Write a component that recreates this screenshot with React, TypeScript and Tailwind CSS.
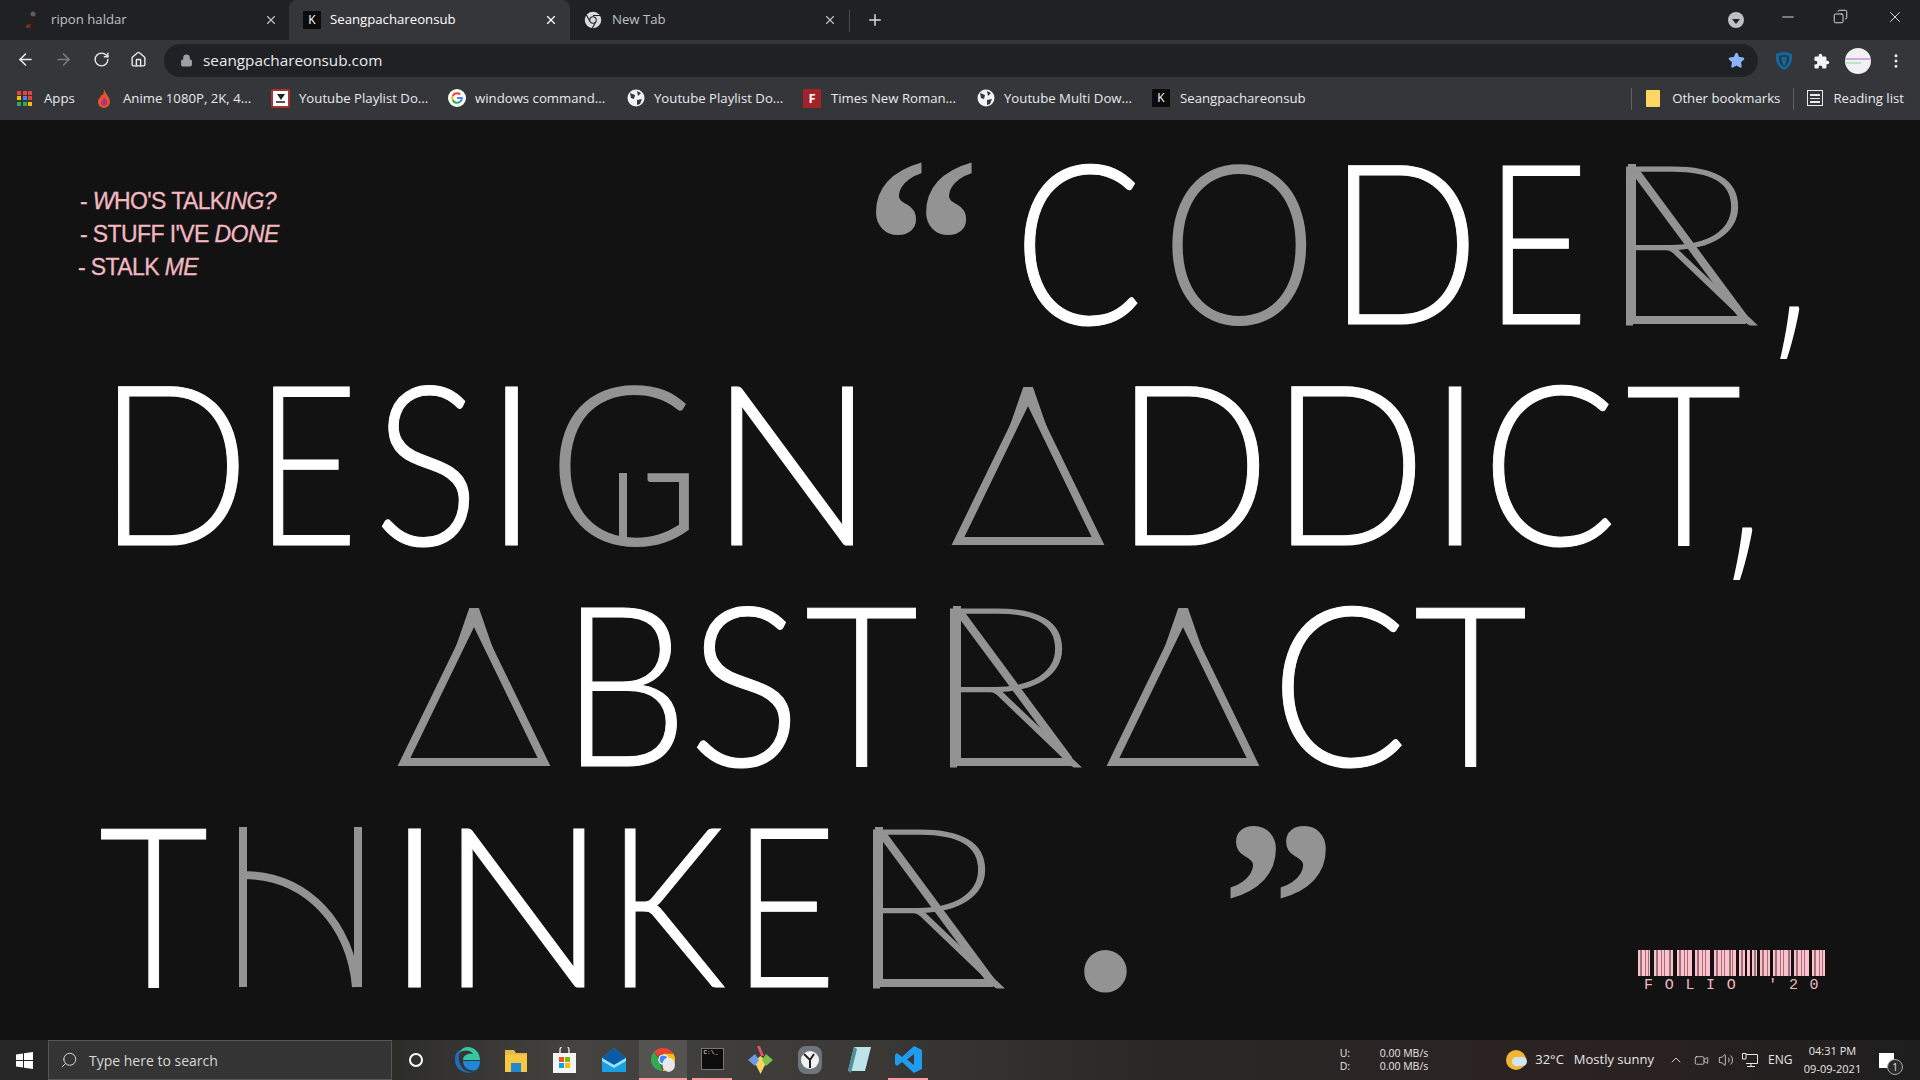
import type { JSX, ReactNode } from "react";
import {
  ArrowLeft,
  ArrowRight,
  ChevronUp,
  Copy,
  Ellipsis,
  Home,
  Lock,
  Minus,
  Plus,
  RotateCw,
  Search,
  Star,
  Video,
  Volume2,
  X,
} from "lucide-react";

const BG = "#121212";
const GREY = "#939393";

const Glyph = ({
  c,
  box,
  inner,
  children,
}: {
  c: string;
  box: string;
  inner: string;
  children?: ReactNode;
}): JSX.Element => (
  <div className={`relative flex shrink-0 justify-center ${box}`}>
    <span className={`block shrink-0 ${inner}`}>{c}</span>
    {children}
  </div>
);

// ornaments that sit over the real letters
const Overlay = ({ w, children }: { w: number; children: ReactNode }): JSX.Element => (
  <svg
    className="absolute left-0 top-[37px] overflow-visible"
    width={w}
    height={160}
    viewBox={`0 0 ${w} 160`}
  >
    {children}
  </svg>
);

const RMark = (): JSX.Element => (
  <Overlay w={123}>
    <path d="M4 0 V160 M0 156 H118 M8 8 L116 154" fill="none" stroke={GREY} strokeWidth={8} />
  </Overlay>
);

const TriangleMark = (): JSX.Element => (
  <Overlay w={150}>
    <polygon points="75,12 5,156 145,156" fill={BG} stroke={GREY} strokeWidth={8} />
  </Overlay>
);

const Big = "font-light text-[223px] leading-[221px] text-white [-webkit-text-stroke:1px_#fff]";
const Dim = "font-light text-[223px] leading-[221px] text-[#939393]";
const DimR = "font-thin text-[223px] leading-[221px] text-[#939393] [-webkit-text-stroke:3px_#939393] scale-x-[1.25] -translate-x-[12px]";
const Comma = "font-['Open_Sans',sans-serif] font-light text-[215px] leading-[221px] text-white translate-y-[10px] scale-x-[0.8]";
const Quote = "font-['Liberation_Serif',serif] font-bold text-[240px] leading-[221px] text-[#939393] translate-y-[4px] scale-x-[0.95]";

const Headline = (): JSX.Element => (
  <div className="flex flex-col font-['Lato',sans-serif]">
    <div className="flex h-[221px]">
      <nav className="ml-[78px] mt-[61px] flex w-[220px] shrink-0 flex-col gap-[7px] whitespace-nowrap font-['Liberation_Sans',sans-serif] text-[23px] leading-[26px] tracking-[-0.6px] text-[#f2b8c1] [-webkit-text-stroke:0.3px_#f2b8c1]">
        <span className="pl-[2px]">- <i>W</i>HO'S TALK<i>ING?</i></span>
        <span className="pl-[2px]">- STUFF I'VE <i>DONE</i></span>
        <span>- STALK <i>ME</i></span>
      </nav>
      <Glyph c="“" box="ml-[575px] w-[97px]" inner={Quote} />
      <Glyph c="C" box="ml-[52px] w-[115px]" inner={`${Big} scale-x-[0.86] -translate-x-[1px]`} />
      <Glyph c="O" box="ml-[36px] w-[132px]" inner={`${Dim} scale-x-[0.89]`} />
      <Glyph c="D" box="ml-[42px] w-[121px]" inner={`${Big} scale-x-[0.9] -translate-x-[4px]`} />
      <Glyph c="E" box="ml-[36px] w-[79px]" inner={`${Big} scale-x-[0.81] -translate-x-[7px]`} />
      <Glyph c="R" box="ml-[45px] w-[123px]" inner={DimR}><RMark /></Glyph>
      <Glyph c="," box="ml-[27px] w-[28px]" inner={Comma} />
    </div>
    <div className="flex h-[221px] pl-[117px]">
      <Glyph c="D" box="w-[121px]" inner={`${Big} scale-x-[0.9] -translate-x-[4px]`} />
      <Glyph c="E" box="ml-[35px] w-[78px]" inner={`${Big} scale-x-[0.8] -translate-x-[5px]`} />
      <Glyph c="S" box="ml-[34px] w-[84px]" inner={`${Big} scale-x-[0.89]`} />
      <Glyph c="I" box="ml-[37px] w-[11px]" inner={Big} />
      <Glyph c="G" box="ml-[42px] w-[132px]" inner={`${Dim} scale-x-[0.95]`}>
        <Overlay w={132}>
          <path d="M64 160 L64 88" fill="none" stroke={GREY} strokeWidth={8} />
        </Overlay>
      </Glyph>
      <Glyph c="N" box="ml-[42px] w-[121px]" inner={`${Big} scale-x-[0.99] -translate-x-[1px]`} />
      <Glyph c="A" box="ml-[99px] w-[150px]" inner={`${Dim} scale-x-[0.85]`}><TriangleMark /></Glyph>
      <Glyph c="D" box="ml-[33px] w-[123px]" inner={`${Big} scale-x-[0.925] -translate-x-[5px]`} />
      <Glyph c="D" box="ml-[35px] w-[120px]" inner={`${Big} scale-x-[0.925] -translate-x-[5px]`} />
      <Glyph c="I" box="ml-[35px] w-[12px]" inner={Big} />
      <Glyph c="C" box="ml-[33px] w-[120px]" inner={`${Big} scale-x-[0.9] -translate-x-[5px]`} />
      <Glyph c="T" box="ml-[15px] w-[110px]" inner={`${Big} scale-x-[0.9]`} />
      <Glyph c="," box="-ml-[9px] w-[30px]" inner={Comma} />
    </div>
    <div className="flex h-[221px] pl-[399px]">
      <Glyph c="A" box="w-[150px]" inner={`${Dim} scale-x-[0.85]`}><TriangleMark /></Glyph>
      <Glyph c="B" box="ml-[30px] w-[97px]" inner={`${Big} scale-x-[0.91] -translate-x-[3px]`} />
      <Glyph c="S" box="ml-[24px] w-[90px]" inner={`${Big} scale-x-[0.95]`} />
      <Glyph c="T" box="ml-[18px] w-[108px]" inner={`${Big} scale-x-[0.88]`} />
      <Glyph c="R" box="ml-[37px] w-[122px]" inner={DimR}><RMark /></Glyph>
      <Glyph c="A" box="ml-[33px] w-[150px]" inner={`${Dim} scale-x-[0.85]`}><TriangleMark /></Glyph>
      <Glyph c="C" box="ml-[24px] w-[120px]" inner={`${Big} scale-x-[0.91] -translate-x-[3px]`} />
      <Glyph c="T" box="ml-[15px] w-[107px]" inner={`${Big} scale-x-[0.88]`} />
    </div>
    <div className="flex h-[221px] pl-[102px]">
      <Glyph c="T" box="w-[104px]" inner={`${Big} scale-x-[0.85]`} />
      <Glyph c="H" box="ml-[33px] w-[123px]" inner={`${Dim} scale-x-[0.85]`}>
        <Overlay w={123}>
          <rect x={9} y={0} width={104} height={160} fill={BG} />
          <path d="M4 0 L4 160 M119 0 L119 160 M4 48 C 70 48 112 100 117 160" fill="none" stroke={GREY} strokeWidth={8} />
        </Overlay>
      </Glyph>
      <Glyph c="I" box="ml-[46px] w-[13px]" inner={Big} />
      <Glyph c="N" box="ml-[43px] w-[120px]" inner={`${Big} scale-x-[1] -translate-x-[1px]`} />
      <Glyph c="K" box="ml-[43px] w-[98px]" inner={`${Big} scale-x-[0.85] -translate-x-[10px]`} />
      <Glyph c="E" box="ml-[25px] w-[79px]" inner={`${Big} scale-x-[0.81] -translate-x-[5px]`} />
      <Glyph c="R" box="ml-[46px] w-[123px]" inner={DimR}><RMark /></Glyph>
      <Glyph c="." box="ml-[86px] w-[43px]" inner="font-normal text-[340px] leading-[221px] text-[#939393] -translate-y-[42px]" />
      <Glyph c="”" box="ml-[103px] w-[97px]" inner={Quote} />
    </div>
  </div>
);

const BARCODE_GROUPS: [number, number][] = [
  [0, 12], [16, 19], [39, 15], [57, 15], [76, 22], [101, 6],
  [109, 3], [114, 5], [122, 10], [135, 18], [156, 15], [174, 13],
];

const Barcode = (): JSX.Element => (
  <svg width={187} height={26} viewBox="0 0 187 26" className="block">
    {BARCODE_GROUPS.map(([x, w]) => (
      <g key={x}>
        <rect x={x} y={0} width={w} height={26} fill="#ffc0cb" />
        {Array.from({ length: Math.floor(w / 4) }, (_, i) => (
          <rect key={i} x={x + 2 + i * 4 + (i % 2)} y={0} width={i % 3 === 0 ? 2 : 1} height={26} fill="#98747b" />
        ))}
      </g>
    ))}
  </svg>
);

const Tab = ({
  icon,
  label,
  active,
  close,
  className,
}: {
  icon: ReactNode;
  label: string;
  active?: boolean;
  close: string;
  className: string;
}): JSX.Element => (
  <div className={`flex h-full shrink-0 items-center ${className} ${active ? "rounded-t-[8px] bg-[#35363a] text-white" : "text-[#bdc1c6]"}`}>
    {icon}
    <span className="grow text-[13.2px]">{label}</span>
    <X className={close} size={14} />
  </div>
);

const KIcon = (): JSX.Element => (
  <span className="flex size-[18px] shrink-0 items-center justify-center bg-[#0b0b0b] text-[12px] text-white">K</span>
);

const Globe = (): JSX.Element => (
  <svg width={18} height={18} viewBox="0 0 18 18" className="shrink-0">
    <circle cx={9} cy={9} r={8.5} fill="#f1f3f4" />
    <path d="M3 4 L8 6 L7 10 L4 9 Z M10 2 L14 4 L11 7 Z M10 11 L15 10 L13 15 L10 16 Z" fill="#35363a" />
  </svg>
);

const GoogleG = (): JSX.Element => (
  <svg width={18} height={18} viewBox="0 0 18 18" className="shrink-0">
    <circle cx={9} cy={9} r={9} fill="#fff" />
    <path d="M9 4.2 A4.8 4.8 0 0 1 12.2 5.4" stroke="#ea4335" strokeWidth={2} fill="none" />
    <path d="M9 4.2 A4.8 4.8 0 0 0 4.7 7" stroke="#ea4335" strokeWidth={2} fill="none" />
    <path d="M4.7 7 A4.8 4.8 0 0 0 4.7 11" stroke="#fbbc05" strokeWidth={2} fill="none" />
    <path d="M4.7 11 A4.8 4.8 0 0 0 12 12.8" stroke="#34a853" strokeWidth={2} fill="none" />
    <path d="M12 12.8 A4.8 4.8 0 0 0 13.8 9 L9 9" stroke="#4285f4" strokeWidth={2} fill="none" />
  </svg>
);

const ChromeLogo = ({ size, light }: { size: number; light?: boolean }): JSX.Element => (
  <svg width={size} height={size} viewBox="0 0 24 24" className="shrink-0">
    {light ? (
      <>
        <circle cx={12} cy={12} r={11} fill="#dadce0" />
        <path d="M12 6 L22 6 M8 14 L3 5 M16 14 L11 23" stroke="#202124" strokeWidth={1.5} />
        <circle cx={12} cy={12} r={5} fill="#202124" />
        <circle cx={12} cy={12} r={3.6} fill="#dadce0" />
      </>
    ) : (
      <>
        <path d="M12 1 A11 11 0 0 1 21.5 6.5 L12 6.5 A5.5 5.5 0 0 0 7 9.5 L3 4.5 A11 11 0 0 1 12 1 Z" fill="#ea4335" />
        <path d="M3 4.5 L8 13 L11 23 A11 11 0 0 1 3 4.5 Z" fill="#34a853" />
        <path d="M21.5 6.5 A11 11 0 0 1 11 23 L16 14 L12 6.5 Z" fill="#fbbc05" />
        <circle cx={12} cy={12} r={5} fill="#fff" />
        <circle cx={12} cy={12} r={3.8} fill="#4285f4" />
        <ellipse cx={17} cy={17} rx={6} ry={7} fill="#e8e8e8" />
      </>
    )}
  </svg>
);

const Bookmark = ({ icon, label, className }: { icon: ReactNode; label: string; className: string }): JSX.Element => (
  <div className={`flex shrink-0 items-center ${className}`}>
    {icon}
    <span>{label}</span>
  </div>
);

const BrowserChrome = (): JSX.Element => (
  <div className="flex flex-col font-['Open_Sans',sans-serif]">
    <div className="flex h-[40px] items-stretch bg-[#202124]">
      <Tab
        className="ml-[24px] w-[265px] gap-[11px] pr-[11px]"
        close="text-[#bdc1c6]"
        label="ripon haldar"
        icon={
          <svg width={16} height={18} viewBox="0 0 16 18" className="shrink-0">
            <circle cx={9} cy={3} r={2.5} fill="#6b5a50" />
            <path d="M6 6 L12 6 L11 13 L14 17 L2 17 L5 12 Z" fill="#2c1d1a" />
            <path d="M2 14 L7 13 L6 17 L2 17 Z" fill="#6e3322" />
          </svg>
        }
      />
      <Tab
        active
        className="w-[281px] gap-[9px] pl-[14px] pr-[12px]"
        close="text-white"
        label="Seangpachareonsub"
        icon={<KIcon />}
      />
      <Tab
        className="w-[279px] gap-[10px] pl-[14px] pr-[12px]"
        close="text-[#bdc1c6]"
        label="New Tab"
        icon={<ChromeLogo size={18} light />}
      />
      <div className="my-[10px] h-[22px] w-px bg-[#4a4c50]" />
      <Plus className="my-auto ml-[16px] text-[#dadce0]" size={18} />
      <div className="grow" />
      <div className="mr-[35px] mt-[12px] flex size-[16px] items-center justify-center rounded-full bg-[#bdc1c6]">
        <span className="mt-[3px] border-x-[4px] border-t-[5px] border-x-transparent border-t-[#202124]" />
      </div>
      <div className="flex h-full items-start pr-[16px] text-white">
        <Minus className="mr-[36px] mt-[8px]" size={18} strokeWidth={1.1} />
        <Copy className="mr-[38px] mt-[9px] -scale-x-100" size={15} strokeWidth={1.3} />
        <X className="mt-[8px]" size={18} strokeWidth={1.1} />
      </div>
    </div>
    <div className="flex h-[37px] items-start bg-[#35363a] pl-[16px]">
      <ArrowLeft className="mt-[10px] text-[#e8eaed]" size={19} />
      <ArrowRight className="ml-[19px] mt-[10px] text-[#7c7e82]" size={19} />
      <RotateCw className="ml-[20px] mt-[11px] text-[#e8eaed]" size={17} />
      <Home className="ml-[20px] mt-[11px] text-[#e8eaed]" size={17} />
      <div className="ml-[17px] mt-[4px] flex h-[33px] w-[1594px] items-center rounded-full bg-[#202124] pl-[16px] pr-[13px]">
        <Lock className="text-[#9aa0a6]" size={13} fill="#9aa0a6" />
        <span className="ml-[10px] grow text-[15.3px] text-[#e8eaed]">seangpachareonsub.com</span>
        <Star className="text-[#8ab4f8]" size={17} fill="#8ab4f8" />
      </div>
      <svg width={18} height={20} viewBox="0 0 18 20" className="ml-[17px] mt-[11px]">
        <path d="M1 3 Q9 -1 17 3 L17 8 Q17 15 9 19 Q1 15 1 8 Z" fill="#0e6aa3" />
        <path d="M4 5 Q9 3 14 5 L14 8 Q14 13 9 16 Q4 13 4 8 Z" fill="#35363a" />
        <path d="M6 6 L12 6 L10.5 14 L8 14 Z" fill="#0e6aa3" />
      </svg>
      <svg width={17} height={17} viewBox="0 0 24 24" className="ml-[20px] mt-[13px]">
        <path d="M20.5 11H19V7a2 2 0 0 0-2-2h-4V3.5a2.5 2.5 0 0 0-5 0V5H4a2 2 0 0 0-2 2v3.8h1.5a2.7 2.7 0 0 1 0 5.4H2V20a2 2 0 0 0 2 2h3.8v-1.5a2.7 2.7 0 0 1 5.4 0V22H17a2 2 0 0 0 2-2v-4h1.5a2.5 2.5 0 0 0 0-5z" fill="#f1f3f4" />
      </svg>
      <div className="ml-[15px] mt-[8px] flex size-[26px] flex-col justify-center gap-[2px] overflow-hidden rounded-full bg-[#f1f1f1]">
        <span className="h-[2px] bg-[#cfa9e8]" />
        <span className="h-[2px] w-[16px] bg-[#b8e6b8]" />
      </div>
      <Ellipsis className="ml-[16px] mt-[12px] rotate-90 text-[#e8eaed]" size={18} />
    </div>
    <div className="flex h-[43px] items-center bg-[#35363a] text-[13.2px] text-[#e8eaed]">
      <Bookmark
        className="ml-[17px] w-[81px] gap-[12px]"
        label="Apps"
        icon={
          <span className="grid size-[15px] shrink-0 grid-cols-3 gap-[1.5px]">
            {["#ea4335", "#ea4335", "#ea4335", "#fbbc05", "#4285f4", "#ea4335", "#34a853", "#34a853", "#fbbc05"].map((c, i) => (
              <span key={i} className="bg-current" style={{ color: c }} />
            ))}
          </span>
        }
      />
      <Bookmark
        className="w-[173px] gap-[13px]"
        label="Anime 1080P, 2K, 4..."
        icon={
          <svg width={12} height={19} viewBox="0 0 12 19" className="shrink-0">
            <path d="M6 0 C7 4 12 8 12 13 A6 6 0 0 1 0 13 C0 9 3 9 3 6 C5 7 6 4 6 0 Z" fill="#e4552d" />
            <path d="M6 8 C8 11 10 12 9 15 A3.5 3.5 0 0 1 3 15 C3 12 5 11 6 8 Z" fill="#b0317d" />
          </svg>
        }
      />
      <Bookmark
        className="w-[177px] gap-[9px]"
        label="Youtube Playlist Do..."
        icon={
          <span className="flex h-[19px] w-[19px] shrink-0 flex-col items-center justify-center gap-[1px] rounded-[2px] border-[2px] border-[#a33] bg-white">
            <span className="border-x-[4px] border-t-[6px] border-x-transparent border-t-[#222]" />
            <span className="h-[2px] w-[9px] bg-[#555]" />
          </span>
        }
      />
      <Bookmark className="w-[179px] gap-[9px]" label="windows command..." icon={<GoogleG />} />
      <Bookmark className="w-[176px] gap-[9px]" label="Youtube Playlist Do..." icon={<Globe />} />
      <Bookmark
        className="w-[174px] gap-[10px]"
        label="Times New Roman..."
        icon={<span className="flex h-[19px] w-[18px] shrink-0 items-center justify-center bg-[#a3222a] text-[13px] font-bold text-white">F</span>}
      />
      <Bookmark className="w-[175px] gap-[9px]" label="Youtube Multi Dow..." icon={<Globe />} />
      <Bookmark className="gap-[10px]" label="Seangpachareonsub" icon={<KIcon />} />
      <div className="grow" />
      <div className="h-[22px] w-px bg-[#5f6368]" />
      <Bookmark
        className="ml-[14px] gap-[12px]"
        label="Other bookmarks"
        icon={<span className="block h-[17px] w-[14px] rounded-[1px] bg-[#fdd663]" />}
      />
      <div className="ml-[13px] h-[22px] w-px bg-[#5f6368]" />
      <Bookmark
        className="ml-[13px] mr-[16px] gap-[10px]"
        label="Reading list"
        icon={
          <span className="flex size-[16px] flex-col justify-center gap-[2px] border-[1.5px] border-[#e8eaed] px-[2px]">
            <span className="h-[1.5px] bg-[#e8eaed]" />
            <span className="h-[1.5px] bg-[#e8eaed]" />
            <span className="h-[1.5px] bg-[#e8eaed]" />
          </span>
        }
      />
    </div>
  </div>
);

const TaskIcon = ({ children, className }: { children: ReactNode; className: string }): JSX.Element => (
  <div className={`flex h-full shrink-0 items-center justify-center ${className}`}>{children}</div>
);

const Taskbar = (): JSX.Element => (
  <div className="flex h-[40px] items-stretch bg-[linear-gradient(90deg,#262626_0%,#2b2b2a_20%,#45433f_30%,#3a3936_45%,#2a2826_60%,#2a2423_75%,#2a2221_85%,#1e1e1e_100%)] font-['Open_Sans',sans-serif] text-white">
    <TaskIcon className="w-[48px]">
      <svg width={17} height={17} viewBox="0 0 17 17">
        <path d="M0 2.4 L7 1.4 V8 H0 Z M8 1.2 L17 0 V8 H8 Z M0 9 H7 V15.6 L0 14.6 Z M8 9 H17 V17 L8 15.8 Z" fill="#fff" />
      </svg>
    </TaskIcon>
    <div className="flex w-[344px] items-center gap-[11px] border border-[#565656] bg-[#343434] pl-[11px] text-[14px] text-[#d8d8d8]">
      <Search className="-scale-x-100" size={18} strokeWidth={1.3} />
      <span>Type here to search</span>
    </div>
    <TaskIcon className="ml-[16px] w-[16px]"><span className="size-[14px] rounded-full border-[2px] border-white" /></TaskIcon>
    <TaskIcon className="ml-[31px] w-[25px]">
      <svg width={25} height={26} viewBox="0 0 25 26">
        <path d="M12 0 C20 0 25 6 25 13 L8 13 C8 9 12 6 18 7 C16 3 9 2 4 6 C6 2 9 0 12 0 Z" fill="#39c5a1" />
        <path d="M0 12 C0 5 4 3 6 3 C3 7 3 14 6 19 C10 26 18 26 22 23 C18 26 12 27 7 24 C3 22 0 18 0 12 Z" fill="#1a6fc0" />
        <path d="M8 14 H25 C25 19 23 22 21 23 C15 25 8 21 8 14 Z" fill="#1c88d8" />
      </svg>
    </TaskIcon>
    <TaskIcon className="ml-[25px] w-[22px]">
      <svg width={22} height={23} viewBox="0 0 22 23">
        <path d="M0 1 H9 L11 4 H22 V8 H0 Z" fill="#e9b949" />
        <rect y={6} width={22} height={17} fill="#f6c945" />
        <rect x={6} y={14} width={10} height={9} fill="#1f88d0" />
      </svg>
    </TaskIcon>
    <TaskIcon className="ml-[26px] w-[23px]">
      <svg width={23} height={26} viewBox="0 0 23 26">
        <path d="M7 7 V3 A4 4 0 0 1 16 3 V7" stroke="#ddd" strokeWidth={1.5} fill="none" />
        <rect y={6} width={23} height={20} fill="#f5f5f5" />
        <rect x={6} y={10} width={5} height={5} fill="#f25022" />
        <rect x={12} y={10} width={5} height={5} fill="#7fba00" />
        <rect x={6} y={16} width={5} height={5} fill="#00a4ef" />
        <rect x={12} y={16} width={5} height={5} fill="#ffb900" />
      </svg>
    </TaskIcon>
    <TaskIcon className="ml-[26px] w-[24px]">
      <svg width={24} height={24} viewBox="0 0 24 24">
        <path d="M12 0 L24 10 V24 H0 V10 Z" fill="#1a9fe0" />
        <path d="M12 0 L24 10 L12 17 L0 10 Z" fill="#0b5ca8" />
        <path d="M0 10 L12 17 L24 10 V13 L12 20 L0 13 Z" fill="#9fe0ff" />
      </svg>
    </TaskIcon>
    <TaskIcon className="ml-[13px] w-[48px] border-b-[2px] border-[#ff9aa5] bg-[#55534f]"><ChromeLogo size={25} /></TaskIcon>
    <TaskIcon className="relative ml-[5px] w-[40px] border-b-[2px] border-[#ff9aa5]">
      <span className="flex h-[22px] w-[23px] items-start border border-[#777] bg-[#0c0c0c] pl-[2px] font-['Liberation_Mono',monospace] text-[6px] leading-[8px] text-white">C:\_</span>
    </TaskIcon>
    <TaskIcon className="ml-[16px] w-[25px]">
      <svg width={25} height={28} viewBox="0 0 25 28">
        <path d="M12.5 10 L19 15 L12.5 28 L6 15 Z" fill="#f6d365" />
        <path d="M0 14 L7 8 L11 14 L7 20 Z" fill="#6c9be8" />
        <path d="M25 14 L18 8 L14 14 L18 20 Z" fill="#7cc24a" />
        <path d="M9 0 H12 L16 10 H13 Z" fill="#e0556a" />
      </svg>
    </TaskIcon>
    <TaskIcon className="ml-[25px] w-[24px]">
      <svg width={24} height={28} viewBox="0 0 24 28">
        <rect width={24} height={28} rx={8} fill="#6f757b" />
        <circle cx={12} cy={14} r={9} fill="#f2f2f2" />
        <path d="M6 8 L12 14 L16 8 M12 14 V22" stroke="#222" strokeWidth={2} fill="none" />
      </svg>
    </TaskIcon>
    <TaskIcon className="ml-[26px] w-[23px]">
      <svg width={23} height={26} viewBox="0 0 23 26">
        <path d="M6 0 H23 L17 24 H0 Z" fill="#bfe3ea" />
        <path d="M0 24 L6 0 L9 2 L3 26 Z" fill="#4d8e99" />
      </svg>
    </TaskIcon>
    <TaskIcon className="ml-[17px] w-[40px] border-b-[2px] border-[#ff9aa5]">
      <svg width={27} height={27} viewBox="0 0 27 27">
        <path d="M19 0 L27 4 V23 L19 27 L7 16 L2 20 L0 18 V9 L2 7 L7 11 Z M19 8 L12 13.5 L19 19 Z" fill="#1f9cf0" />
      </svg>
    </TaskIcon>
    <div className="grow" />
    <div className="mr-[78px] grid grid-cols-[40px_auto] content-center text-[10.5px] leading-[13px] text-[#e6e6e6]">
      <span>U:</span>
      <span>0.00 MB/s</span>
      <span>D:</span>
      <span>0.00 MB/s</span>
    </div>
    <div className="flex items-center text-[13px] text-[#e6e6e6]">
      <span className="relative size-[20px] rounded-full bg-[#f2b632]">
        <span className="absolute bottom-[4px] right-[-1px] h-[9px] w-[15px] rounded-full bg-[#cfe6f7]" />
      </span>
      <span className="ml-[9px]">32°C</span>
      <span className="ml-[10px]">Mostly sunny</span>
      <ChevronUp className="ml-[14px]" size={16} strokeWidth={1.3} />
      <Video className="ml-[10px]" size={15} strokeWidth={1.2} />
      <Volume2 className="ml-[9px]" size={16} strokeWidth={1.2} />
      <svg width={16} height={15} viewBox="0 0 16 15" className="ml-[8px]" fill="none" stroke="#e6e6e6">
        <path d="M4 1.5 H15.5 V10.5 H4 M9 10.5 V13.5 M5 13.5 H13 M0.5 0.5 H4 V6 H0.5 Z" />
      </svg>
      <span className="ml-[10px] w-[22px] text-[12px]">ENG</span>
      <div className="ml-[14px] flex w-[57px] flex-col items-center whitespace-nowrap text-[11px] leading-[18px]">
        <span>04:31 PM</span>
        <span>09-09-2021</span>
      </div>
      <div className="relative ml-[18px] mr-[26px] h-[15px] w-[15px] bg-white">
        <span className="absolute -bottom-[7px] -right-[9px] flex size-[16px] items-center justify-center rounded-full border border-[#aaa] bg-[#2a2a2a] text-[10px] leading-none">1</span>
      </div>
    </div>
  </div>
);

const App = (): JSX.Element => (
  <div className="flex h-screen w-full flex-col overflow-hidden bg-[#121212]">
    <BrowserChrome />
    <main className="relative grow pt-[7px]">
      <Headline />
      <div className="absolute right-[95px] top-[830px] flex w-[187px] flex-col items-start gap-[1px]">
        <Barcode />
        <span className="whitespace-pre pl-[6px] font-['Liberation_Mono',monospace] text-[15px] leading-[18px] tracking-[11.7px] text-[#f2b8c1]">FOLIO '20</span>
      </div>
    </main>
    <Taskbar />
  </div>
);

export default App;
